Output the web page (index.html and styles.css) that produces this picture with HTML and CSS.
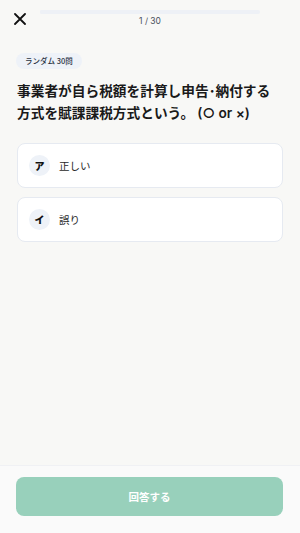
FILE: index.html
```html
<!DOCTYPE html>
<html lang="ja">
<head>
    <meta charset="UTF-8">
    <meta name="viewport" content="width=device-width, initial-scale=1.0">
    <title>クイズ</title>
    <link rel="stylesheet" href="styles.css">
</head>
<body>
    <div class="screen">
        <header class="topBar">
            <button class="closeBtn" aria-label="閉じる">
                <svg width="12" height="12" viewBox="0 0 12 12">
                    <path d="M1 1 L11 11 M11 1 L1 11" stroke="#111" stroke-width="1.8" stroke-linecap="round"/>
                </svg>
            </button>
            <div class="progressWrap">
                <div class="progress"><div class="progressFill" style="width: 3.3%"></div></div>
                <span class="count">1 / 30</span>
            </div>
        </header>

        <main class="content">
            <span class="tag">ランダム 30問</span>
            <h1 class="question">事業者が自ら税額を計算し申告･納付する<br>方式を賦課課税方式という。 <span class="hint">(○ or ×)</span></h1>

            <ul class="options">
                <li class="option">
                    <span class="mark">ア</span>
                    <span class="label">正しい</span>
                </li>
                <li class="option">
                    <span class="mark">イ</span>
                    <span class="label">誤り</span>
                </li>
            </ul>
        </main>

        <footer class="footer">
            <button class="answerBtn">回答する</button>
        </footer>
    </div>
</body>
</html>
```

FILE: styles.css
```css
* {
    box-sizing: border-box;
}
body {
    margin: 0;
    background-color: #f8f8f6;
    font-family: "Noto Sans CJK JP", "Noto Sans", sans-serif;
    color: #1a1a1a;
}
.screen {
    display: flex;
    flex-direction: column;
    height: 533px;
}
.topBar {
    display: flex;
    align-items: flex-start;
    padding: 10px 0 0 14px;
    height: 40px;
}
.closeBtn {
    width: 12px;
    height: 12px;
    margin-top: 3px;
    padding: 0;
    border: none;
    background: none;
    display: flex;
}
.progressWrap {
    display: flex;
    flex-direction: column;
    align-items: center;
    width: 220px;
    margin-left: 14px;
}
.progress {
    width: 100%;
    height: 4px;
    border-radius: 2px;
    background-color: #eef1f6;
    overflow: hidden;
}
.progressFill {
    height: 100%;
    background-color: #eef1f6;
}
.count {
    margin-top: 1px;
    font-family: "Inter", "Noto Sans", sans-serif;
    font-size: 8.5px;
    line-height: 12px;
    color: #4a5160;
}
.content {
    flex: 1;
    padding: 13px 17px 0 16px;
}
.tag {
    display: block;
    width: fit-content;
    padding: 0 9px;
    height: 16px;
    line-height: 16px;
    border-radius: 8px;
    background-color: #eef2f8;
    font-size: 7.5px;
    font-weight: 500;
    color: #2b3445;
}
.question {
    margin: 11px 0 0 1px;
    font-family: "Inter", "Noto Sans CJK JP", sans-serif;
    font-size: 13.7px;
    font-weight: 700;
    line-height: 22px;
    white-space: nowrap;
    color: #1a1a1a;
}
.hint {
    font-weight: 600;
}
.options {
    list-style: none;
    margin: 19px 0 0 1px;
    padding: 0;
    display: flex;
    flex-direction: column;
    gap: 9px;
}
.option {
    display: flex;
    align-items: center;
    height: 45px;
    padding: 0 11px;
    background-color: #fff;
    border: 1px solid #e6eaf1;
    border-radius: 8px;
}
.mark {
    display: flex;
    align-items: center;
    justify-content: center;
    width: 21px;
    height: 21px;
    border-radius: 50%;
    background-color: #eef2f8;
    font-size: 10px;
    font-weight: 900;
    color: #111;
}
.label {
    margin-left: 9px;
    font-size: 10.5px;
    color: #2a2a2a;
}
.footer {
    border-top: 1px solid #f0f1f4;
    background-color: #fafafa;
    padding: 11px 17px 17px 16px;
}
.answerBtn {
    display: block;
    width: 100%;
    height: 39px;
    border: none;
    border-radius: 8px;
    background-color: #98d0bb;
    color: #fff;
    font-family: "Noto Sans CJK JP", sans-serif;
    font-size: 10.5px;
    font-weight: 700;
}
```
